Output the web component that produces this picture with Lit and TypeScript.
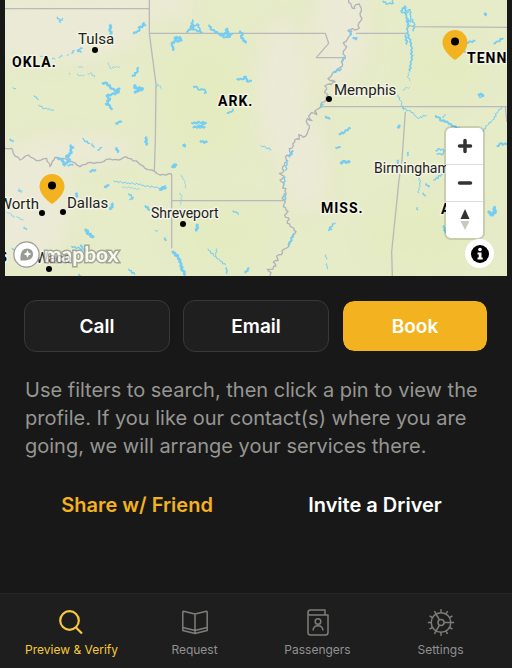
import { LitElement, html, css, svg } from "lit";
import { customElement } from "lit/decorators.js";

type Stroke = [points: string, width: number];

/** Turns a plain polyline into a wandering one, the way rivers and shores run. */
function meander(points: string, amp: number, step: number): string {
  const pts = points.split(" ").map((p) => p.split(",").map(Number));
  const swing = [0.9, -0.5, 1, -1, 0.3, -0.8, 0.6, -0.2];
  const out = [pts[0].join(",")];
  let k = 0;
  for (let i = 1; i < pts.length; i++) {
    const [ax, ay] = pts[i - 1];
    const dx = pts[i][0] - ax;
    const dy = pts[i][1] - ay;
    const len = Math.hypot(dx, dy) || 1;
    const n = Math.max(1, Math.round(len / step));
    for (let j = 1; j <= n; j++) {
      const off = j === n ? 0 : swing[k++ % swing.length] * amp;
      const x = ax + (dx * j) / n - (dy / len) * off;
      const y = ay + (dy * j) / n + (dx / len) * off;
      out.push(`${x.toFixed(1)},${y.toFixed(1)}`);
    }
  }
  return out.join(" ");
}

// Map geometry is kept on a 1506 x 828 grid, three units to a pixel.
const borders = [
  "0,26 448,26",
  "448,0 448,100 468,252 466,420 463,514",
  "448,100 976,100 986,130 949,173 1030,173",
  "515,522 515,745",
  "515,602 856,602",
  "1068,100 1223,100",
  "1223,76 1243,80 1521,82",
  "963,320 1521,320",
  "1216,335 1206,480 1197,540 1175,755 1177,828",
  "1516,320 1521,366",
];

const redRiver =
  "15,445 35,445 40,460 60,480 85,465 110,482 140,475 150,500 165,472 190,475 215,485 240,500 265,488 300,488 320,478 355,480 378,470 415,488 435,505 463,513 480,525 515,522";

const mississippi =
  "1046,0 1054,18 1064,26 1068,14 1078,12 1084,24 1080,40 1086,56 1076,70 1078,84 1064,90 1052,88 1044,92 1052,104 1042,118 1030,128 1040,140 1030,154 1036,175 1024,186 1026,200 1012,208 1003,215 990,232 984,236 1006,246 988,252 974,258 980,268 974,278 984,284 978,300 962,314 956,326 944,334 950,344 934,338 926,348 936,362 922,356 922,372 928,384 922,400 910,412 896,404 898,418 884,420 880,438 868,446 872,462 856,470 860,486 848,500 852,512 838,520 852,528 840,540 852,548 848,564 858,566 856,588 846,596 856,606 850,620 864,634 854,646 868,658 862,670 876,682 888,695 878,708 872,726 860,744 846,752 844,764 830,768 834,782 820,786 828,798 812,808 802,808 813,818 810,828";

const water: Stroke[] = [
  ["172,50 180,62 188,54", 4], ["180,60 182,68", 4],
  ["334,74 330,86 334,96 328,104", 8], ["434,68 428,78 436,76 416,82 418,92 400,102", 6],
  ["248,145 232,150 244,158", 4], ["224,152 214,160", 4], ["206,162 202,168", 3], ["188,168 176,172", 3], ["166,178 156,176", 3], ["130,172 120,170", 3],
  ["325,188 330,204 360,200", 2], ["234,198 250,203", 2], ["232,220 240,228 254,224", 2], ["262,222 272,218 284,232", 2],
  ["208,218 210,224", 2], ["416,202 410,218 396,230", 6],
  ["306,248 322,250 330,262 344,272 358,266 354,278 336,282 320,288 330,296 318,312 330,318 336,330", 7],
  ["408,254 404,264 428,266 412,274 404,280", 8], ["466,262 474,252 486,268", 2],
  ["38,262 48,266", 3], ["102,286 116,298", 3], ["116,314 134,326 162,331", 3], ["346,370 356,366 366,366", 7],
  ["518,152 518,140 516,128 530,122 524,114 540,112 544,122 530,124", 7],
  ["558,96 574,84 578,60 580,84 592,72 600,88 606,98 584,88 568,84", 5],
  ["628,74 636,90 654,100 674,104 682,86 684,112 696,102 676,112 658,104", 6],
  ["720,92 728,104 724,114 738,130", 7], ["710,236 726,238 738,230 740,244 756,242", 6],
  ["580,258 592,262 600,270 614,268 614,280 620,276", 5], ["680,338 694,336 698,326", 5], ["682,304 690,308", 3],
  ["574,368 600,368 618,368 602,378 580,382 616,380", 6],
  ["30,416 40,426", 5], ["248,414 252,420 270,430", 4], ["440,410 438,436", 7], ["550,432 558,438", 9], ["600,422 622,428", 6],
  ["188,478 194,496 210,480 198,470 214,460 212,436 220,446", 7], ["172,474 190,480", 6], ["202,496 220,492", 4],
  ["276,430 282,444", 4], ["292,450 306,442", 4], ["350,442 354,458", 7], ["268,514 288,508", 6],
  ["516,496 530,498", 12], ["544,524 552,540 558,566", 2], ["540,578 546,590 540,616", 2],
  ["312,560 328,556", 7], ["340,542 366,548 400,550 440,558 466,562 482,566 498,556", 3], ["366,560 420,568", 2], ["478,568 498,560", 9],
  ["386,580 400,592 388,600", 4], ["58,564 64,578 54,570 68,574", 2], ["232,578 228,598", 7], ["340,610 332,630", 8],
  ["436,616 450,630", 6], ["20,636 34,642 42,654", 2], ["50,648 70,662", 2], ["72,680 80,690", 4],
  ["258,686 266,702 280,714", 9], ["464,690 474,692", 3], ["494,712 500,722", 5], ["594,672 590,694", 8],
  ["698,632 708,636 716,644", 4], ["624,746 644,770 660,780 676,796", 3], ["644,768 652,746", 3], ["680,802 682,822", 4],
  ["748,804 736,820", 6], ["386,806 404,824", 4], ["236,822 244,828", 5], ["518,752 534,772 542,788 548,812 556,826", 8],
  ["214,738 240,746 262,752", 4], ["242,734 250,742", 6], ["36,744 44,748", 4],
  ["1148,2 1164,12 1180,10 1178,0", 4], ["1058,112 1070,114 1066,120", 6],
  ["1202,34 1214,18 1218,44 1224,62 1222,90 1228,116 1236,146 1234,182 1230,214", 5],
  ["1202,34 1218,40 1230,28 1232,52 1242,68 1240,94", 4], ["1218,60 1234,66", 6], ["1218,104 1220,134", 5], ["1228,216 1224,234 1232,244", 2],
  ["1208,270 1220,262 1230,262", 2], ["1194,284 1202,302 1206,318 1212,330", 3],
  ["1208,322 1226,332 1242,342 1252,354 1280,346", 3], ["1306,346 1316,352 1326,362 1344,368 1362,378 1380,390", 6],
  ["1326,352 1338,344", 3], ["1446,396 1462,376 1478,360 1494,334 1506,322", 3],
  ["1456,38 1460,46", 8], ["1400,128 1412,124 1426,124", 5], ["1480,130 1494,124 1510,114", 5], ["1386,150 1398,158", 5],
  ["1480,166 1500,178", 4], ["1434,282 1452,284", 7], ["1436,290 1452,290", 4],
  ["976,348 990,358", 6], ["1016,402 1034,396 1052,384", 6], ["1192,384 1198,374", 8], ["782,436 798,442 814,450", 3],
  ["1006,442 1022,442", 5], ["1020,488 1034,484 1050,488", 8], ["984,692 992,680 1006,668", 4], ["992,680 996,690", 5],
  ["977,764 980,778", 3], ["980,790 984,808", 3], ["1226,456 1222,468", 4], ["1196,480 1192,492", 5],
  ["1306,452 1318,446 1332,452 1330,462 1310,462", 4], ["1256,524 1260,548 1256,580", 3], ["1278,550 1288,562", 5], ["1252,622 1254,630", 4],
  ["1270,578 1276,590", 4], ["1300,540 1330,522", 4], ["1332,676 1336,700", 5],
  ["1468,632 1472,644 1486,638 1484,622 1482,644", 9], ["1490,438 1504,430 1521,434", 6],
];

const riverWater: Stroke[] = [
  ["1056,92 1050,106", 6], ["1034,170 1026,186", 4], ["1000,216 1024,206", 6], ["970,312 962,324", 5],
  ["880,452 868,472", 6], ["864,480 856,512", 4], ["856,530 852,556", 4], ["854,580 856,600", 5], ["884,700 864,736", 5],
];

const pin = (x: number, y: number, name: string) => svg`
  <g transform="translate(${x} ${y})" role="img" aria-label=${name}>
    <path class="pin" d="M0 17C-2 16-12.500 8-12.500-.5a12.500 12.500 0 0 1 25 0C12.500 8 2 16 0 17Z"/>
    <circle r="4" cy="-1.500"/>
  </g>`;

@customElement("region-map")
export class RegionMap extends LitElement {
  static styles = css`
    :host { display: block; position: relative; height: 276px; overflow: hidden; background: #e6ebc8; }
    .map { display: block; width: 100%; height: 100%; }
    .lines polyline { fill: none; stroke-linejoin: round; }
    .border { stroke: #b8b9b8; stroke-width: 4; }
    .winding { stroke: #b0b3b8; stroke-width: 4; }
    .water { stroke: #74cdf2; }
    .terrain { color-interpolation-filters: sRGB; }
    .sand { fill: #ebead6; }
    .leaf { fill: #e4ebc1; }
    text { font: 15px "DIN Pro", Roboto, sans-serif; fill: #222; stroke: #f3f4e4; stroke-width: 3px; stroke-linejoin: round; paint-order: stroke; }
    .small { font-size: 14px; }
    .state { font-weight: 700; font-size: 14px; letter-spacing: 1px; fill: #000; }
    .pin { fill: #f3b21f; }
    .controls { position: absolute; right: 24px; top: 128px; width: 37px; display: flex; flex-direction: column; border-radius: 5px; background: #fff; box-shadow: 0 0 0 2px rgba(0, 0, 0, .12); overflow: hidden; }
    .controls button { display: grid; place-items: center; height: 36px; padding: 0; border: 0; background: none; }
    .controls button + button { border-top: 1px solid #ddd; height: 37px; }
    .info { position: absolute; right: 13px; top: 239px; width: 29px; height: 29px; display: grid; place-items: center; padding: 0; border: 0; border-radius: 50%; background: #fff; }
    .brand { position: absolute; left: 8px; top: 240px; display: flex; align-items: center; gap: 4px; color: #fff; text-decoration: none; font: 700 21px/28px Lato, sans-serif; -webkit-text-stroke: 3px #8c8d85; paint-order: stroke fill; }
    .brand span { opacity: .72; }
  `;

  render() {
    return html`
      <svg class="map" viewBox="0 0 502 276" preserveAspectRatio="xMidYMid slice" role="img" aria-label="Map of the southern states">
        <defs><filter id="soft" class="terrain" x="-30%" y="-30%" width="160%" height="160%"><feGaussianBlur class="terrain" stdDeviation="9"/></filter></defs>
        <g filter="url(#soft)">
          <ellipse class="sand" cx="45" cy="30" rx="90" ry="32"/>
          <ellipse class="sand" cx="120" cy="5" rx="70" ry="15"/>
          <ellipse class="sand" cx="20" cy="205" rx="45" ry="60"/>
          <ellipse class="sand" cx="70" cy="150" rx="60" ry="15"/>
          <ellipse class="sand" cx="335" cy="30" rx="26" ry="55"/>
          <ellipse class="sand" cx="278" cy="90" rx="26" ry="70"/>
          <ellipse class="sand" cx="300" cy="165" rx="22" ry="48"/>
          <ellipse class="leaf" cx="200" cy="100" rx="48" ry="62"/>
          <ellipse class="leaf" cx="440" cy="70" rx="42" ry="30"/>
          <ellipse class="leaf" cx="420" cy="235" rx="60" ry="38"/>
          <ellipse class="leaf" cx="215" cy="235" rx="50" ry="35"/>
        </g>
        <g class="lines" transform="scale(.33333) translate(-15 0)">
          ${borders.map((b) => svg`<polyline class="border" points=${b}/>`)}
          <polyline class="winding" points=${meander(redRiver, 2, 9)}/>
          <polyline class="winding" points=${meander(mississippi, 3, 7)}/>
          ${water.map(([p, w]) => svg`<polyline class="water" points=${meander(p, 3, 5)} stroke-width=${w}/>`)}
          ${riverWater.map(([p, w]) => svg`<polyline class="water" points=${meander(p, 3, 6)} stroke-width=${w}/>`)}
        </g>
        <g>
          <circle cx="90" cy="50" r="3"/><circle cx="324" cy="99" r="3"/>
          <circle cx="37" cy="213" r="3"/><circle cx="58" cy="212" r="3"/>
          <circle cx="178" cy="224" r="3"/><circle cx="44" cy="269" r="3"/>
        </g>
        <text x="73" y="44">Tulsa</text>
        <text x="329" y="95">Memphis</text>
        <text x="62" y="208">Dallas</text>
        <text x="34" y="209" text-anchor="end">Fort Worth</text>
        <text class="small" x="146" y="218">Shreveport</text>
        <text class="small" x="31" y="263">Waco</text>
        <text class="small" x="369" y="173">Birmingham</text>
        <text class="state" x="7" y="67">OKLA.</text>
        <text class="state" x="213" y="106">ARK.</text>
        <text class="state" x="316" y="213">MISS.</text>
        <text class="state" x="462" y="63">TENN.</text>
        <text class="state" x="436" y="214">ALA.</text>
        <text class="state" x="3" y="262" text-anchor="end">TEXAS</text>
        ${pin(47, 187, "Dallas driver")}
        ${pin(450, 43, "Nashville driver")}
      </svg>
      <a class="brand" href="#mapbox">
        <svg width="27" height="27" viewBox="0 0 27 27" aria-hidden="true">
          <circle cx="13.500" cy="13.500" r="12" fill="#fff" stroke="#999a93" stroke-width="2.500"/>
          <path d="M7.500 19.500C7 13 8.500 7.500 14.500 7.500a5.500 5.500 0 0 1 5.500 5.500c0 6-6 7-12.500 6.500Z" fill="#999a93"/>
          <path d="m14.500 9 1.200 2.800 2.800 1.200-2.800 1.200-1.200 2.800-1.200-2.800-2.800-1.200 2.800-1.200Z" fill="#fff"/>
        </svg>
        <span>mapbox</span>
      </a>
      <div class="controls">
        <button aria-label="Zoom in"><svg width="16" height="16"><path d="M8 2.500v11M2.500 8h11" stroke="#333" stroke-width="3.500" stroke-linecap="round"/></svg></button>
        <button aria-label="Zoom out"><svg width="16" height="16"><path d="M2.500 8h11" stroke="#333" stroke-width="3.500" stroke-linecap="round"/></svg></button>
        <button aria-label="Reset bearing to north"><svg width="12" height="22"><path d="M6 0l4.500 10h-9Z" fill="#333"/><path d="M6 21l4.500-9h-9Z" fill="#c8c8bd"/></svg></button>
      </div>
      <button class="info" aria-label="Attribution">
        <svg width="20" height="20"><circle cx="10" cy="10" r="9" fill="#000"/><circle cx="10" cy="5.500" r="1.800" fill="#fff"/><path d="M7.500 8.500h4v5h1.200v2h-5.200v-2h1.200v-3H7.500Z" fill="#fff"/></svg>
      </button>
    `;
  }
}

const cogTeeth = Array.from({ length: 12 }, (_, i) => svg`<path d="M14 4V.800" transform="rotate(${i * 30} 14 14)"/>`);

const tabs = [
  {
    label: "Preview & Verify",
    icon: svg`<g stroke-width="2.200"><circle cx="11.500" cy="12.500" r="9.300"/><path d="m18 19.500 6 6"/></g>`,
  },
  {
    label: "Request",
    icon: svg`<path d="M15 6 3.500 3.200Q2.800 3.200 2.800 4v18.500L15 25.500l12.200-3V4q0-.8-.8-.8L15 6v19.500M2.800 19.500 15 22.500l12.200-3"/>`,
  },
  {
    label: "Passengers",
    icon: svg`<path d="M21 6.500V2H6.500Q4 2 4 4.500v20Q4 27 6.500 27h15q2.500 0 2.500-2.500V7H6Q4 7 4 5"/><circle cx="14" cy="13.500" r="2.800"/><path d="M9 22.500c.5-6.500 9.500-6.500 10 0"/>`,
  },
  {
    label: "Settings",
    icon: svg`<circle cx="14" cy="14.500" r="9.800"/><circle cx="14" cy="14.500" r="3"/><path d="M17 14.500h6.800M12.500 11.900 9 6M12.500 17.100 9 23"/><g transform="translate(0 .5)">${cogTeeth}</g>`,
  },
];

@customElement("app-root")
export class AppRoot extends LitElement {
  static styles = css`
    :host { display: flex; flex-direction: column; min-height: 100vh; box-sizing: border-box; background: #181818; color: #fff; font-family: Inter, sans-serif; }
    button { font: inherit; color: inherit; }
    main { flex: 1; }
    region-map { margin: 0 5px; }
    .actions { display: grid; grid-template-columns: repeat(3, 1fr); gap: 13px; padding: 24px 24px 0; }
    .action { height: 52px; border: 1px solid #383838; border-radius: 12px; background: #1f1f1f; font-size: 19px; font-weight: 600; }
    .primary { border-color: #181818; background: #f3b21f; background-clip: padding-box; }
    .hint { margin: 24px 25px 0; font-size: 20px; line-height: 28px; color: #969692; }
    .links { display: grid; grid-template-columns: 1fr 1fr; padding: 27px 18px 24px; }
    .link { padding: 0; border: 0; background: none; font-size: 20px; line-height: 36px; font-weight: 600; }
    .accent { color: #f3b21f; }
    nav { display: grid; grid-template-columns: repeat(4, 1fr); padding: 14px 10px 8px; border-top: 1px solid #262626; background: #1e1e1e; }
    .tab { display: flex; flex-direction: column; align-items: center; gap: 4px; color: #919191; text-decoration: none; font-size: 12px; line-height: 20px; white-space: nowrap; }
    .tab svg { fill: none; stroke: #7d7d7a; stroke-width: 1.5; stroke-linejoin: round; }
    .current { color: #f8c93f; }
    .current svg { stroke: #f8c93f; }
  `;

  render() {
    return html`
      <main>
        <region-map></region-map>
        <div class="actions">
          <button class="action">Call</button>
          <button class="action">Email</button>
          <button class="action primary">Book</button>
        </div>
        <p class="hint">Use filters to search, then click a pin to view the profile. If you like our contact(s) where you are going, we will arrange your services there.</p>
        <div class="links">
          <button class="link accent">Share w/ Friend</button>
          <button class="link">Invite a Driver</button>
        </div>
      </main>
      <nav>
        ${tabs.map(
          (t, i) => html`<a class="tab ${i === 0 ? "current" : ""}" href="#tab-${i + 1}">
            <svg width=${i === 1 ? 30 : 28} height="28" aria-hidden="true">${t.icon}</svg>
            <span>${t.label}</span>
          </a>`,
        )}
      </nav>
    `;
  }
}
